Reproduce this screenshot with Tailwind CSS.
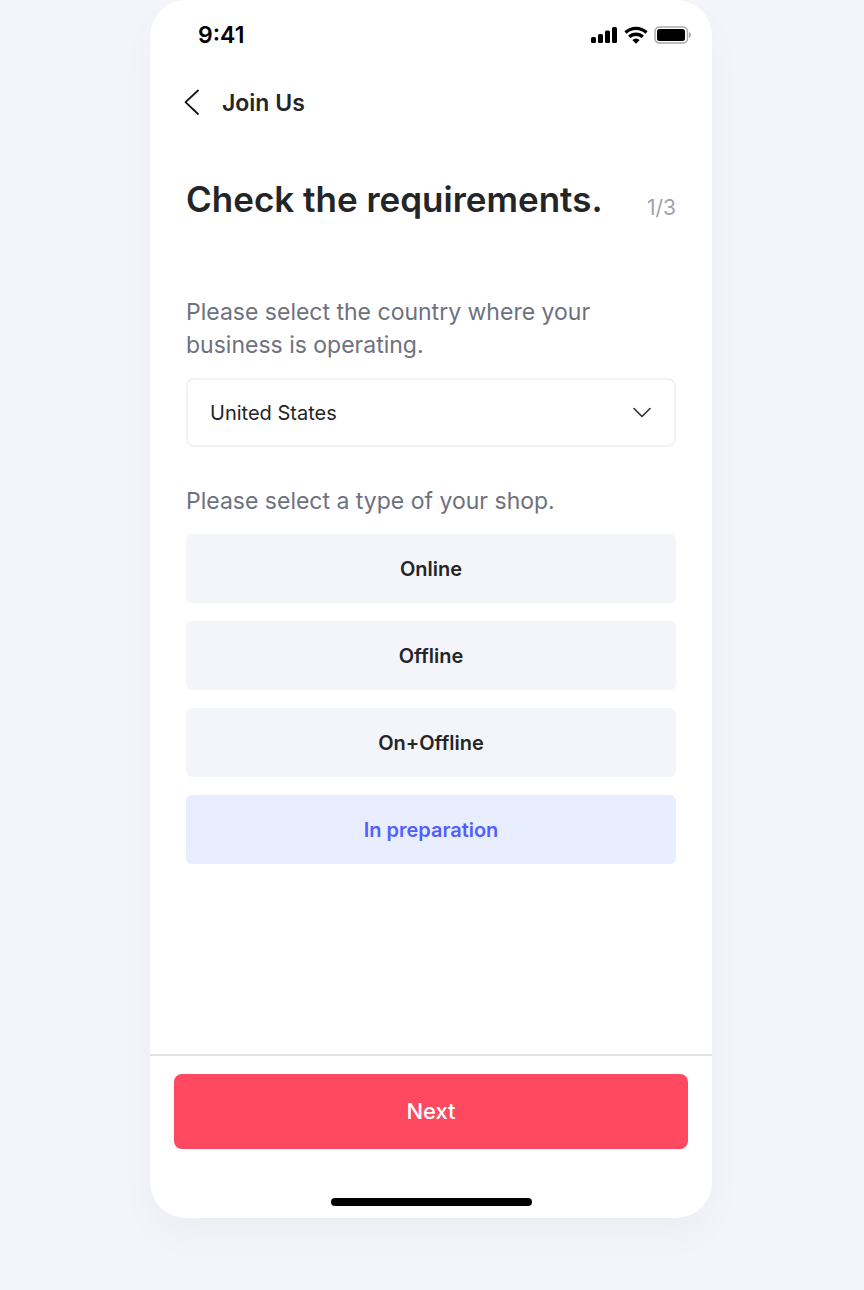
<!doctype html>
<html lang="en">

  <head>
    <meta charset="UTF-8" />
    <meta name="viewport" content="width=device-width, initial-scale=1.0" />
    <title>Join Us</title>
    <script src="https://cdn.jsdelivr.net/npm/@tailwindcss/browser@4"></script>
  </head>

  <body class="min-h-screen bg-[#f4f5fb] pr-0.5 pb-18 font-['Inter',sans-serif] text-[#242527]">
    <div class="w-full max-w-[562px] mx-auto flex flex-col bg-white rounded-[36px] shadow-[0_18px_36px_rgba(0,0,0,0.03)]">

      <!-- Status bar -->
      <div class="flex justify-between items-center h-[70px] pl-12 pr-5 text-black">
        <span class="text-[23px] font-semibold">9:41</span>
        <div class="flex items-center gap-1.5">
          <svg class="w-7 h-[18px]" viewBox="0 0 28 18" fill="currentColor">
            <rect x="1" y="11" width="5" height="6" rx="1.5" />
            <rect x="8" y="8" width="5" height="9" rx="1.5" />
            <rect x="15" y="4.5" width="5" height="12.5" rx="1.5" />
            <rect x="22" y="1" width="5" height="16" rx="1.5" />
          </svg>
          <svg class="w-6 h-[18px]" viewBox="0 0 24 18" fill="none" stroke="currentColor" stroke-width="3.4">
            <path d="M1.5 6.6a15.2 15.2 0 0 1 21 0" />
            <path d="M5.3 10.9a9.6 9.6 0 0 1 13.4 0" />
            <path d="M8.3 14.1a5.6 5.6 0 0 1 7.4 0L12 17.800z" fill="currentColor" stroke="none" />
          </svg>
          <svg class="w-[38px] h-[18px]" viewBox="0 0 38 18">
            <rect x="1" y="1" width="32.5" height="16" rx="4.5" fill="none" stroke="#a9a9ad" stroke-width="1.5" />
            <rect x="3" y="3" width="28" height="12" rx="2.5" fill="currentColor" />
            <path d="M35 6v6c1-.4 1.9-1.6 1.9-3s-.9-2.6-1.9-3z" fill="#a9a9ad" />
          </svg>
        </div>
      </div>

      <header class="flex items-center h-[66px] pl-8">
        <button type="button" aria-label="Back" class="w-5 h-8 flex items-center cursor-pointer">
          <svg class="w-5 h-7" viewBox="0 0 20 28" fill="none" stroke="#111" stroke-width="1.8">
            <path d="M16 1.5 3.5 13.2 16 25" stroke-linecap="round" stroke-linejoin="round" />
          </svg>
        </button>
        <span class="pl-5 text-[23px] font-semibold">Join Us</span>
      </header>

      <main class="px-9 pt-9 pb-[190px]">
        <div class="flex justify-between items-end">
          <h1 class="text-[35px] leading-[54px] font-semibold">Check the requirements.</h1>
          <span class="text-[21px] leading-9 text-[#a0a2ab]">1/3</span>
        </div>

        <!-- Country -->
        <label for="country" class="block mt-[70px] text-[23px] leading-[33px] text-[#6e717e]">Please select the country where your business is operating.</label>
        <div class="relative mt-4">
          <select id="country" class="w-full h-[69px] px-[22px] appearance-none rounded-lg border-2 border-[#f1f1f7] bg-white text-[20px]">
            <option>United States</option>
          </select>
          <svg class="absolute right-[25px] top-7 w-[18px] h-3 pointer-events-none" viewBox="0 0 18 12" fill="none" stroke="#2f3035" stroke-width="1.6">
            <path d="m1 2.5 8 8 8-8" stroke-linecap="round" stroke-linejoin="round" />
          </svg>
        </div>

        <!-- Shop type -->
        <fieldset class="mt-[38px]">
          <legend class="text-[23px] leading-[33px] text-[#6e717e]">Please select a type of your shop.</legend>
          <div class="mt-4 flex flex-col gap-[18px] text-[20px] font-semibold">
            <label class="relative flex items-center justify-center h-[69px] rounded-md bg-[#f4f5fb] cursor-pointer has-checked:bg-[#e8eeff] has-checked:text-[#525fff]">
              <input type="radio" name="shop" value="online" class="absolute inset-0 opacity-0" />Online
            </label>
            <label class="relative flex items-center justify-center h-[69px] rounded-md bg-[#f4f5fb] cursor-pointer has-checked:bg-[#e8eeff] has-checked:text-[#525fff]">
              <input type="radio" name="shop" value="offline" class="absolute inset-0 opacity-0" />Offline
            </label>
            <label class="relative flex items-center justify-center h-[69px] rounded-md bg-[#f4f5fb] cursor-pointer has-checked:bg-[#e8eeff] has-checked:text-[#525fff]">
              <input type="radio" name="shop" value="both" class="absolute inset-0 opacity-0" />On+Offline
            </label>
            <label class="relative flex items-center justify-center h-[69px] rounded-md bg-[#f4f5fb] cursor-pointer has-checked:bg-[#e8eeff] has-checked:text-[#525fff]">
              <input type="radio" name="shop" value="preparation" class="absolute inset-0 opacity-0" checked />In preparation
            </label>
          </div>
        </fieldset>
      </main>

      <footer class="flex flex-col items-center px-6 pt-[18px] pb-3 border-t-2 border-[#e1e1e7]">
        <button type="button" class="w-full h-[75px] rounded-lg bg-[#ff4961] text-white text-[22px] font-medium cursor-pointer">Next</button>
        <div class="mt-[49px] w-[201px] h-2 rounded-full bg-black"></div>
      </footer>

    </div>
  </body>

</html>
